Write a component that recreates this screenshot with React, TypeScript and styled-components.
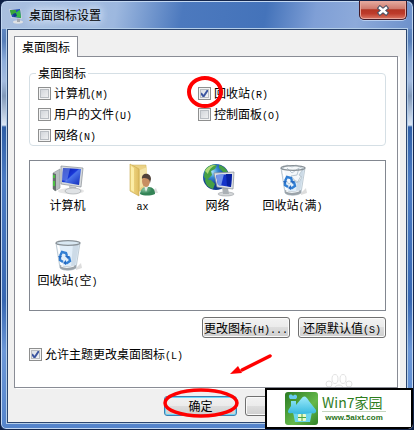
import React from "react";
import styled, { createGlobalStyle, css } from "styled-components";

const GlobalStyle = createGlobalStyle`
  * { box-sizing: border-box; }
  body { margin: 0; background: #0d1f45; }
  body, button, input { font-family: "Noto Sans CJK SC", sans-serif; font-size: 12px; line-height: 16px; color: #000; }
`;

const Window = styled.main`
  position: relative;
  display: flex;
  flex-direction: column;
  padding: 0 6px 6px;
  border: 1px solid #14264c;
  border-radius: 7px 7px 6px 6px;
  box-shadow: inset 0 0 0 1px #c3d8f2;
  overflow: hidden;
  background:
    linear-gradient(100deg, #a9bfdf 0, #9db8df 28%, #4c79be 44%, #4473ba 64%, #7f9fd6 76%, #8daada 86%, #6d91cb 100%) 0 0 / 100% 28px no-repeat,
    linear-gradient(180deg, #6f95ce 0, #587fb9 40px, #8eaedb 60px, #a4bce0 80px, #8199ba 95px, #dce7f5 124px, #2e5ea6 126px, #4c7cc4 180px, #3767b2 300px, #6d98d8 350px, #5383cb 430px);
`;

const TitleBar = styled.header`
  display: flex;
  align-items: flex-start;
  height: 28px;
  padding-left: 2px;
`;

const TitleIcon = styled.svg`
  width: 14px;
  height: 16px;
  margin-top: 7px;
`;

const Title = styled.h1`
  flex: 1;
  margin: 6px 0 0 6px;
  font-size: 12px;
  font-weight: 400;
  line-height: 16px;
  text-shadow: 0 0 8px #e2ecfa, 0 0 8px #d4e2f5, 0 0 12px #d4e2f5;
`;

const CloseButton = styled.button`
  display: grid;
  place-items: center;
  width: 48px;
  height: 19px;
  padding: 0;
  border: 1px solid #421a27;
  border-top: 0;
  border-radius: 0 0 5px 5px;
  box-shadow: inset 0 0 0 1px #e7a79d, 0 1px 0 #b7cef0;
  background: linear-gradient(#e5aca1 0, #cf786b 45%, #b33524 48%, #bd3b2b 70%, #db7865 100%);
`;

const Client = styled.div`
  padding: 6px 8px 6px 6px;
  border: 1px solid #2c466f;
  box-shadow: 0 0 0 1px #b4cee9;
  background: #f0f0f0;
`;

const Tab = styled.button`
  position: relative;
  z-index: 1;
  display: block;
  width: 64px;
  height: 21px;
  margin-bottom: -1px;
  padding: 0;
  border: 1px solid #898c95;
  border-bottom: 0;
  background: #fff;
`;

const Panel = styled.section`
  position: relative;
  padding: 8px 11px 25px 14px;
  border: 1px solid #898c95;
  box-shadow: 2px 1px 0 #fff;
  background: #fff;
`;

const Group = styled.fieldset`
  display: grid;
  grid-template-columns: 160px 1fr;
  row-gap: 5px;
  min-width: 0;
  margin: 0;
  padding: 4px 8px 2px;
  border: 1px solid #d5dfe5;
  border-radius: 4px;
`;

const Legend = styled.legend`
  margin-left: -2px;
  padding: 0 2px;
`;

const CheckLabel = styled.label`
  position: relative;
  display: flex;
  align-items: center;
  gap: 3px;
`;

const Check = styled.input`
  appearance: none;
  display: block;
  width: 13px;
  height: 13px;
  margin: 0;
  border: 1px solid #8e8f8f;
  box-shadow: inset 0 0 0 1px #f4f4f4, inset 0 0 0 2px #b9bdc2;
  background: linear-gradient(135deg, #cbcfd5, #f6f6f6);
  &:checked {
    background: url("data:image/svg+xml,%3Csvg xmlns='http://www.w3.org/2000/svg' viewBox='0 0 11 11'%3E%3Cpath d='M2 5.2 4.5 8.5 9 1.8' fill='none' stroke='%233c56a0' stroke-width='2'/%3E%3C/svg%3E"), linear-gradient(135deg, #d4d9e0, #fafafa);
  }
`;

const Half = styled.span`
  font-family: "Liberation Mono", monospace;
  font-size: 10px;
  line-height: 0;
`;

const IconList = styled.ul`
  display: grid;
  grid-template-columns: repeat(4, 75px);
  grid-auto-rows: 75px;
  height: 151px;
  margin: 14px 0 6px;
  padding: 0;
  border: 1px solid #828790;
  list-style: none;
`;

const IconItem = styled.li`
  display: flex;
  flex-direction: column;
  align-items: center;
  padding-top: 2px;
  white-space: nowrap;
  svg { width: 34px; height: 34px; }
`;

const ButtonRow = styled.div`
  display: flex;
  justify-content: flex-end;
  gap: 8px;
  margin-bottom: 8px;
`;

const PushButton = styled.button<{ $primary?: boolean }>`
  position: relative;
  flex: 0 0 auto;
  width: 88px;
  height: 21px;
  padding: 0;
  border: 1px solid #707070;
  border-radius: 3px;
  box-shadow: inset 0 0 0 1px #fafafa;
  background: linear-gradient(#f2f2f2 0, #ebebeb 48%, #dddddd 50%, #cfcfcf 100%);
  white-space: nowrap;
  ${(p) => p.$primary && css`
    border-color: #3c7fb1;
    box-shadow: inset 0 0 0 1px #6bd6f7;
  `}
`;

const Footer = styled.footer`
  display: flex;
  gap: 8px;
  padding: 8px 0 0 150px;
  ${PushButton} { width: 73px; height: 20px; }
`;

const Mark = styled.svg<{ $left: number; $top: number; $width: number; $height: number }>`
  position: absolute;
  z-index: 2;
  left: ${(p) => p.$left}px;
  top: ${(p) => p.$top}px;
  width: ${(p) => p.$width}px;
  height: ${(p) => p.$height}px;
  pointer-events: none;
`;

const Paw = styled.svg`
  position: absolute;
  right: 44px;
  bottom: 0;
  width: 28px;
  height: 13px;
`;

const Brand = styled.aside`
  position: absolute;
  z-index: 3;
  right: 0;
  bottom: 0;
  display: flex;
  align-items: center;
  gap: 4px;
  width: 148px;
  height: 41px;
  padding-left: 18px;
  border: 2px solid #000;
  background: #fff;
  svg { width: 33px; height: 33px; }
`;

const BrandText = styled.div`
  display: flex;
  flex-direction: column;
  width: 64px;
`;

const BrandName = styled.span`
  font-size: 14px;
  line-height: 18px;
  color: #2e7d1e;
  white-space: nowrap;
  border-bottom: 1px solid #c5d5c0;
`;

const BrandLink = styled.a`
  align-self: center;
  font: 700 8px/12px "Liberation Sans", sans-serif;
  color: #2b7420;
  text-decoration: none;
`;

function ComputerIcon() {
  return (
    <svg viewBox="0 0 34 34" aria-hidden="true">
      <defs>
        <linearGradient id="screen" x1="0" y1="0" x2="1" y2="1">
          <stop offset="0" stopColor="#0717a5" /><stop offset=".45" stopColor="#1837d8" />
          <stop offset=".5" stopColor="#4a73ea" /><stop offset="1" stopColor="#0d28b8" />
        </linearGradient>
      </defs>
      <ellipse cx="20" cy="28" rx="13" ry="3" fill="#e6e6e6" />
      <path d="M2 10 9 6v19l-5 3-2-2z" fill="#b9bec2" stroke="#8b9094" strokeWidth=".6" />
      <path d="m2 10 3 1v17l-3-2z" fill="#65706c" />
      <path d="M3 12v3M3 18v5" stroke="#45db37" strokeWidth="1.5" />
      <path d="m18 23 7 1 1 4h-7z" fill="#b9bdc1" />
      <ellipse cx="22" cy="28" rx="8" ry="3" fill="#dfe2e5" stroke="#9da2a6" strokeWidth=".6" />
      <path d="m10 3 22 2-2 19-20-3z" fill="#d6dade" stroke="#888e94" strokeWidth=".7" />
      <path d="m12 5 18 1-2 16-17-3z" fill="url(#screen)" />
      <path d="m12 5 7 .3-3 13-5-1z" fill="#84a2ef" opacity=".5" />
    </svg>
  );
}

function FolderIcon() {
  return (
    <svg viewBox="0 0 34 34" aria-hidden="true">
      <defs>
        <linearGradient id="folder"><stop offset="0" stopColor="#f4de8c" /><stop offset="1" stopColor="#dfbd61" /></linearGradient>
        <radialGradient id="shirt" cx=".3" cy=".3"><stop offset="0" stopColor="#8ac6a3" /><stop offset="1" stopColor="#338356" /></radialGradient>
      </defs>
      <path d="M23 30h9l-2-5z" fill="#ddd" />
      <path d="M6 2h14l1 23-10 4-5-2z" fill="#ebd285" stroke="#cbb15e" strokeWidth=".5" />
      <path d="M4 1 13 6v27l-9-5z" fill="url(#folder)" stroke="#c7a84e" strokeWidth=".6" />
      <path d="m14 7 7-3v17l-7 4z" fill="#f3e3a7" />
      <path d="m5 3 3 2v24l-3-2z" fill="#fff2b0" opacity=".8" />
      <path d="M14 31c1-6 4-8 9-7 4 0 6 3 6 7-5 2-11 2-15 0z" fill="url(#shirt)" />
      <path d="m18 23 2 6 2-5z" fill="#e3eee8" />
      <ellipse cx="20" cy="18" rx="4" ry="6" fill="#c88e62" />
      <path d="M16 16c-1-7 9-7 9 0l-1 4c0-4-3-5-7-5z" fill="#51423a" />
    </svg>
  );
}

function NetworkIcon() {
  return (
    <svg viewBox="0 0 34 34" aria-hidden="true">
      <defs>
        <radialGradient id="globe" cx=".35" cy=".3"><stop offset="0" stopColor="#a8e1fb" /><stop offset=".45" stopColor="#3689d2" /><stop offset="1" stopColor="#123c8d" /></radialGradient>
      </defs>
      <circle cx="15" cy="14" r="13" fill="url(#globe)" />
      <path d="M4 7C7 2 12 1 16 2l-2 4-4 2 1 4-5 5-3-3zM18 2c4 1 8 4 9 8l-5-1-4-4zM4 16l6 1 4 4-2 5c-4-1-8-4-8-10z" fill="#46a044" />
      <path d="M4 8c3-5 7-6 11-6-5 2-7 5-8 9z" fill="#aed978" />
      <ellipse cx="25" cy="31" rx="8" ry="2" fill="#d3d6d8" stroke="#9ca0a4" strokeWidth=".6" />
      <path d="m21 24 6 1 1 6h-6z" fill="#abb0b5" />
      <path d="m13 10 20-1-1 17-16-2z" fill="#dfe3e6" stroke="#878d94" strokeWidth=".7" />
      <path d="m15 12 16-1-1 13-13-2z" fill="#1533c9" />
      <path d="m15 12 8-1-3 12-3-1z" fill="#7595e9" />
      <path d="m25 11 6 0-1 13-4-1z" fill="#0820a0" />
    </svg>
  );
}

function BinIcon({ full }: { full?: boolean }) {
  return (
    <svg viewBox="0 0 34 34" aria-hidden="true">
      <path d="m25 30 5-5 1 5-6 2z" fill="#ddd" />
      <path d="M5 5h24l-4 25c-4 3-13 3-16 0z" fill="#e1eef9" stroke="#b4c0c9" strokeWidth=".8" />
      <path d="m22 6 6 0-4 23h-4z" fill="#bfcfda" opacity=".6" />
      {full && <path d="m7 5 4-3 5 2 4-2 7 4-4 6 3 2-3 5-6-2-4 4-4-5-3-6z" fill="#f5f8fa" stroke="#afbec8" strokeWidth=".7" />}
      {full && <path d="m11 5 5 5 7-5-2 7-6 1 6 7 4-7" fill="none" stroke="#bac8d2" />}
      <path d="m7 6 4 23" stroke="#fff" strokeWidth="2" />
      <ellipse cx="17" cy="5" rx="12" ry="2.4" fill={full ? "none" : "#d9e8f3"} stroke="#899197" strokeWidth="1.3" />
      <path d="M9 27c4 2 12 2 16 0v3c-4 3-13 3-16 0z" fill="#9ba3a9" />
      <path d="M10 28c4 2 10 1 13 0" stroke="#f0f4f6" strokeWidth="1.3" fill="none" />
      <g fill="none" stroke="#327fd3" strokeWidth="2.4">
        <path d="m9 18 2-4 4 1 1 3" /><path d="m18 19 1 4-3 2h-2" /><path d="m12 24-3-2 0-3" />
      </g>
      <path d="m14 18 5 0-2 3zM15 22v5l-3-2zM7 18l4 0-2 3z" fill="#266bc2" />
    </svg>
  );
}

const icons = [
  { id: "computer", name: "计算机", icon: <ComputerIcon /> },
  { id: "ax", name: <Half>ax</Half>, icon: <FolderIcon /> },
  { id: "network", name: "网络", icon: <NetworkIcon /> },
  { id: "full", name: <>回收站<Half>(</Half>满<Half>)</Half></>, icon: <BinIcon full /> },
  { id: "empty", name: <>回收站<Half>(</Half>空<Half>)</Half></>, icon: <BinIcon /> },
];

type OptionProps = { text: string; hotkey: string; checked?: boolean; children?: React.ReactNode };

function Option({ text, hotkey, checked, children }: OptionProps) {
  return (
    <CheckLabel>
      <Check type="checkbox" defaultChecked={checked} />
      <span>{text}<Half>({hotkey})</Half></span>
      {children}
    </CheckLabel>
  );
}

export default function App() {
  return (
    <>
      <GlobalStyle />
      <Window>
        <TitleBar>
          <TitleIcon viewBox="0 0 14 16" aria-hidden="true">
            <ellipse cx="9" cy="14" rx="5" ry="1.7" fill="#e0e2e4" />
            <path d="m8 10 3 0 0 4H8z" fill="#a4a9b0" />
            <path d="m0 1 12 0 1 10-11-1z" fill="#c9d2df" />
            <path d="m1 2 10-1 1 9-9-1z" fill="#2450b4" />
            <path d="m1 2 6 0 0 3-5 2z" fill="#38a53a" />
            <path d="m6 5 5-3 1 8-5-1z" fill="#36bb44" />
            <path d="m4 6 3-1 1 3-3 1z" fill="#163987" />
          </TitleIcon>
          <Title>桌面图标设置</Title>
          <CloseButton aria-label="关闭">
            <svg width="12" height="11" viewBox="0 0 12 11" aria-hidden="true">
              <path d="m3 3 6 5m0-5-6 5" stroke="#4c5366" strokeWidth="4.5" strokeLinecap="square" />
              <path d="m3 3 6 5m0-5-6 5" stroke="#fff" strokeWidth="2.4" strokeLinecap="square" />
            </svg>
          </CloseButton>
        </TitleBar>
        <Client>
          <Tab role="tab" aria-selected="true">桌面图标</Tab>
          <Panel>
            <Group>
              <Legend>桌面图标</Legend>
              <Option text="计算机" hotkey="M" />
              <Option text="回收站" hotkey="R" checked>
                <Mark $left={-11} $top={-9} $width={38} $height={34} viewBox="0 0 38 34">
                  <ellipse cx="18" cy="16" rx="16" ry="14" fill="none" stroke="#f00" strokeWidth="4" />
                </Mark>
              </Option>
              <Option text="用户的文件" hotkey="U" />
              <Option text="控制面板" hotkey="O" />
              <Option text="网络" hotkey="N" />
            </Group>
            <IconList>
              {icons.map((item) => (
                <IconItem key={item.id}>{item.icon}<span>{item.name}</span></IconItem>
              ))}
            </IconList>
            <ButtonRow>
              <PushButton>更改图标<Half>(H)...</Half></PushButton>
              <PushButton>还原默认值<Half>(S)</Half></PushButton>
            </ButtonRow>
            <Option text="允许主题更改桌面图标" hotkey="L" checked />
            <Mark $left={214} $top={296} $width={46} $height={24} viewBox="0 0 46 24">
              <path d="m41 3-28 14" stroke="#f00" strokeWidth="3.5" strokeLinecap="round" />
              <path d="m1 21 8-8 4 7z" fill="#f00" />
            </Mark>
            <Paw viewBox="0 0 28 13" fill="none" stroke="#e2e2e2" aria-hidden="true">
              <ellipse cx="10" cy="5" rx="3" ry="4.5" /><ellipse cx="18" cy="5" rx="3" ry="4.5" />
              <ellipse cx="4" cy="10" rx="3" ry="3" /><ellipse cx="24" cy="10" rx="3" ry="3" />
              <path d="M9 14c3-4 7-4 10 0" />
            </Paw>
          </Panel>
          <Footer>
            <PushButton $primary>
              确定
              <Mark $left={-3} $top={-10} $width={80} $height={32} viewBox="0 0 80 32">
                <ellipse cx="39" cy="16" rx="36" ry="13" fill="none" stroke="#f00" strokeWidth="3.5" />
              </Mark>
            </PushButton>
            <PushButton aria-label="取消" />
          </Footer>
        </Client>
        <Brand>
          <svg viewBox="0 0 33 33" aria-hidden="true">
            <defs>
              <linearGradient id="tile" x1="0" y1="0" x2="1" y2="1"><stop offset="0" stopColor="#2a7b22" /><stop offset=".6" stopColor="#65b84a" /><stop offset="1" stopColor="#2f8228" /></linearGradient>
              <linearGradient id="roof" x1="0" y1="0" x2="0" y2="1"><stop offset="0" stopColor="#9ceafa" /><stop offset="1" stopColor="#36b9df" /></linearGradient>
            </defs>
            <rect width="33" height="33" rx="3" fill="url(#tile)" />
            <path d="M8 20h19l-2 10H10z" fill="#6bd5ec" />
            <path d="M6 9h5v4l5-6c3-4 5-3 8 2l7 9c1 3-2 4-5 3-6 1-14 2-19 0-4 1-5-1-3-4l2-3z" fill="url(#roof)" />
            <path d="M5 7C2 3 6 1 8 4c2-3 6 0 3 3z" fill="#68c9ee" />
            <rect x="13" y="22" width="8" height="7" rx="1" fill="#e9faca" />
            <path d="M17 22v7M13 25.5h8" stroke="#4aa545" />
          </svg>
          <BrandText>
            <BrandName>Win7家园</BrandName>
            <BrandLink href="#home">www.5aixt.com</BrandLink>
          </BrandText>
        </Brand>
      </Window>
    </>
  );
}
